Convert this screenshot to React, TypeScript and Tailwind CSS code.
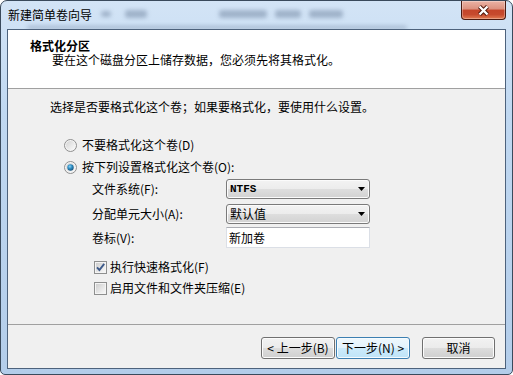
import React from 'react';

// Win7 style radio (13x13)
const Radio: React.FC<{ checked?: boolean }> = ({ checked }) => (
  <svg width="13" height="13" viewBox="0 0 13 13" className="shrink-0">
    <defs>
      <linearGradient id={checked ? 'rg-on' : 'rg-off'} x1="0" y1="0" x2="1" y2="1">
        <stop offset="0" stopColor="#d4d4d4" />
        <stop offset="1" stopColor="#fbfbfb" />
      </linearGradient>
      <radialGradient id="dot" cx="0.4" cy="0.35" r="0.7">
        <stop offset="0" stopColor="#8fd3f5" />
        <stop offset="0.45" stopColor="#2f8fc4" />
        <stop offset="1" stopColor="#1a4f77" />
      </radialGradient>
    </defs>
    <circle cx="6.5" cy="6.5" r="6" fill="#f4f4f4" stroke="#8f8f8f" />
    <circle cx="6.5" cy="6.5" r="4.5" fill={checked ? 'url(#rg-on)' : 'url(#rg-off)'} />
    {checked && <circle cx="6.5" cy="6.5" r="3.2" fill="url(#dot)" />}
  </svg>
);

// Win7 style checkbox (13x13)
const Check: React.FC<{ checked?: boolean }> = ({ checked }) => (
  <svg width="13" height="13" viewBox="0 0 13 13" className="shrink-0">
    <defs>
      <linearGradient id={checked ? 'cg-on' : 'cg-off'} x1="0" y1="0" x2="1" y2="1">
        <stop offset="0" stopColor="#cfcfcf" />
        <stop offset="1" stopColor="#f7f7f7" />
      </linearGradient>
    </defs>
    <rect x="0.5" y="0.5" width="12" height="12" fill="#f4f4f4" stroke="#8e8f8f" />
    <rect x="2" y="2" width="9" height="9" fill={checked ? 'url(#cg-on)' : 'url(#cg-off)'} />
    {checked && (
      <path d="M3 6.3 L5.4 9 L10.2 2.8" fill="none" stroke="#3d5a8a" strokeWidth="1.9" />
    )}
  </svg>
);

const CloseButton: React.FC = () => (
  <div className="w-[45px] h-[19px] rounded-b-[4px] border border-t-0 border-[#4a1a10] bg-[linear-gradient(180deg,#ebb3a5_0%,#dc907e_45%,#c4452a_50%,#c64a2e_75%,#e27b52_100%)] shadow-[inset_0_0_0_1px_rgba(255,255,255,0.3)] flex items-center justify-center">
    <svg width="13" height="11" viewBox="0 0 13 11">
      <path d="M2.5 1.5 L10.5 9.5 M10.5 1.5 L2.5 9.5" stroke="#4a1409" strokeWidth="4.2" />
      <path d="M2.5 1.5 L10.5 9.5 M10.5 1.5 L2.5 9.5" stroke="#ffffff" strokeWidth="2.4" />
    </svg>
  </div>
);

const Combo: React.FC<{ value: string; mono?: boolean }> = ({ value, mono }) => (
  <div className="w-[144px] h-[20px] rounded-[3px] border border-[#7a7a7a] bg-[linear-gradient(#f3f3f3_0%,#ececec_50%,#dedede_50%,#d2d2d2_100%)] shadow-[inset_0_0_0_1px_#fbfbfb] flex items-center justify-between pl-[3px] pr-[4px]">
    <span className={mono ? "font-['Liberation_Mono',monospace] text-[11px] font-bold leading-[14px]" : 'leading-[14px]'}>
      {value}
    </span>
    <svg width="7" height="4" viewBox="0 0 7 4">
      <path d="M0 0h7L3.5 4z" fill="#000" />
    </svg>
  </div>
);

const FormRow: React.FC<{ label: string; children: React.ReactNode; className?: string }> = ({ label, children, className }) => (
  <div className={'flex items-center ' + (className ?? '')}>
    <span className="w-[134px] leading-[14px]">{label}</span>
    {children}
  </div>
);

const btn =
  'h-[22px] rounded-[3px] border flex items-center justify-center leading-[14px] text-[12px] text-black';

// blurred shapes of the window behind the glass title bar
const Smudge: React.FC<{ className: string }> = ({ className }) => (
  <span className={'absolute rounded-[3px] bg-[#7f93ad] opacity-60 blur-[2px] ' + className} />
);

export default function App() {
  return (
    <div className="w-[513px] h-[375px] bg-white">
      <div className="w-[513px] h-[375px] flex flex-col rounded-t-[7px] rounded-b-[5px] border border-[#3a4a5c] bg-[linear-gradient(180deg,#d3e4f6_0%,#c0d8f1_30%,#b3cdea_100%)] px-[6px] pb-[5px] font-['Noto_Sans_CJK_SC','Noto_Sans',sans-serif] text-[12px] text-black">
        {/* title bar */}
        <div className="relative h-[28px] flex items-start justify-between">
          <Smudge className="left-[94px] top-[10px] w-[10px] h-[6px]" />
          <Smudge className="left-[118px] top-[9px] w-[22px] h-[8px]" />
          <Smudge className="left-[212px] top-[9px] w-[48px] h-[8px]" />
          <Smudge className="left-[268px] top-[9px] w-[26px] h-[8px]" />
          <Smudge className="left-[302px] top-[9px] w-[34px] h-[8px]" />
          <Smudge className="left-[20px] top-[25px] w-[380px] h-[3px] opacity-30" />
          <span className="relative pl-[1px] pt-[7px] leading-[14px]">新建简单卷向导</span>
          <CloseButton />
        </div>

        {/* client area */}
        <div className="relative flex-1 flex flex-col border border-[#4d627c] bg-[#f0f0f0]">
          {/* header */}
          <div className="h-[59px] bg-white border-b border-[#a0a0a0] pl-[22px] pt-[9px]">
            <div className="font-bold leading-[14px]">格式化分区</div>
            <div className="pl-[22px] leading-[14px]">要在这个磁盘分区上储存数据，您必须先将其格式化。</div>
          </div>

          {/* body */}
          <div className="flex-1 flex flex-col pl-[42px] pt-[11px]">
            <div className="leading-[14px]">选择是否要格式化这个卷；如果要格式化，要使用什么设置。</div>

            <div className="mt-[24px] ml-[14px] h-[14px] flex items-center gap-[5px]">
              <Radio />
              <span className="leading-[14px]">不要格式化这个卷(D)</span>
            </div>
            <div className="mt-[8px] ml-[14px] h-[14px] flex items-center gap-[5px]">
              <Radio checked />
              <span className="leading-[14px]">按下列设置格式化这个卷(O):</span>
            </div>

            <div className="ml-[42px] flex flex-col">
              <FormRow label="文件系统(F):" className="mt-[5px]">
                <Combo value="NTFS" mono />
              </FormRow>
              <FormRow label="分配单元大小(A):" className="mt-[5px]">
                <Combo value="默认值" />
              </FormRow>
              <FormRow label="卷标(V):" className="mt-[3px]">
                <div className="w-[144px] h-[21px] border border-[#dbdfe6] border-t-[#abadb3] bg-white pl-[2px] flex items-center leading-[14px]">
                  新加卷
                </div>
              </FormRow>
            </div>

            <div className="mt-[12px] ml-[44px] h-[14px] flex items-center gap-[3px]">
              <Check checked />
              <span className="leading-[14px]">执行快速格式化(F)</span>
            </div>
            <div className="mt-[7px] ml-[44px] h-[14px] flex items-center gap-[3px]">
              <Check />
              <span className="leading-[14px]">启用文件和文件夹压缩(E)</span>
            </div>
          </div>

          {/* footer */}
          <div className="h-[44px] border-t border-[#a0a0a0] flex items-start justify-end pt-[12px] pr-[10px]">
            <div className="flex gap-[1px]">
              <div className={btn + ' w-[74px] border-[#707070] bg-[linear-gradient(#f2f2f2_0%,#ebebeb_50%,#dddddd_50%,#cfcfcf_100%)] shadow-[inset_0_0_0_1px_#fcfcfc]'}>
                &lt; 上一步(B)
              </div>
              <div className={btn + ' w-[74px] border-[#3c7fb1] bg-[linear-gradient(#eef8fd_0%,#e3f3fc_50%,#cdebfb_50%,#bfe4f8_100%)] shadow-[inset_0_0_0_1px_#f6fbfe]'}>
                下一步(N) &gt;
              </div>
            </div>
            <div className={btn + ' ml-[12px] w-[73px] border-[#707070] bg-[linear-gradient(#f2f2f2_0%,#ebebeb_50%,#dddddd_50%,#cfcfcf_100%)] shadow-[inset_0_0_0_1px_#fcfcfc]'}>
              取消
            </div>
          </div>
        </div>
      </div>
    </div>
  );
}
